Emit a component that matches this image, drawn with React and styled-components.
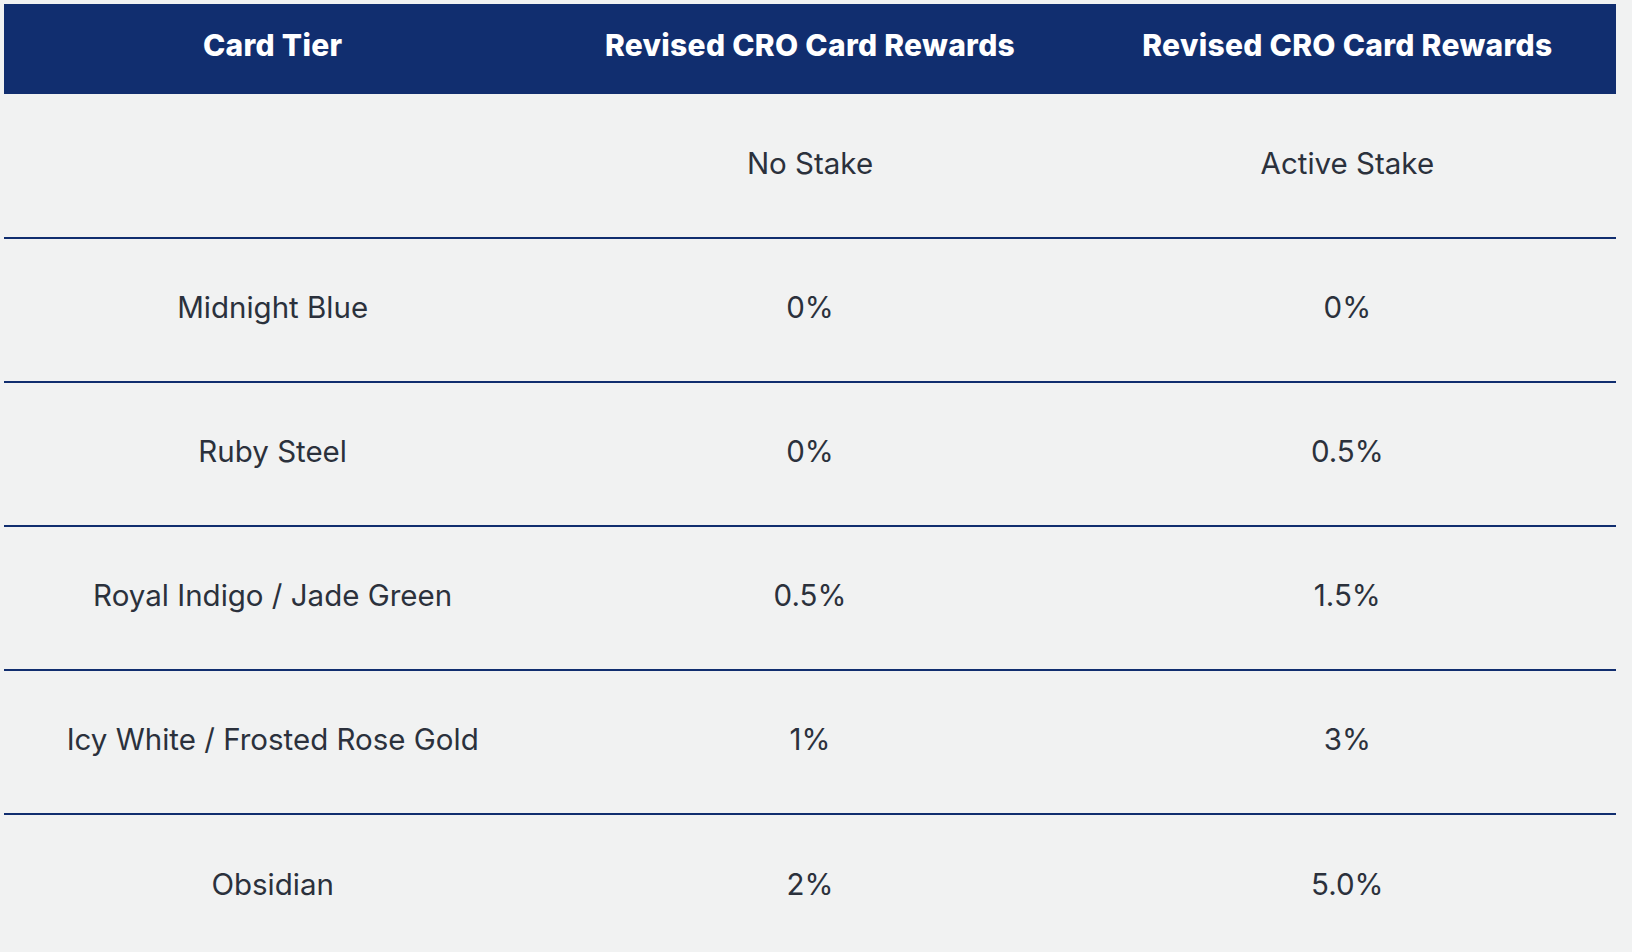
import styled, { createGlobalStyle } from 'styled-components';

const GlobalStyle = createGlobalStyle`
  html,
  body {
    margin: 0;
    background: #f1f2f2;
  }

  body {
    padding: 4px 16px 0 4px;
    font-family: Inter, 'Liberation Sans', sans-serif;
  }
`;

const Table = styled.table`
  width: 100%;
  border-collapse: collapse;
  table-layout: fixed;
`;

const HeadCell = styled.th`
  box-sizing: border-box;
  height: 90px;
  padding: 0 12px 8px;
  background: #112e6f;
  color: #ffffff;
  font-size: 30px;
  font-weight: 800;
  letter-spacing: 0.3px;
  text-align: center;
  vertical-align: middle;
`;

const Row = styled.tr`
  border-bottom: ${({ $last }) => ($last ? 'none' : '2px solid #112e6f')};
`;

const Cell = styled.td`
  box-sizing: border-box;
  height: 144px;
  padding: 0 12px 6px;
  color: #2b313c;
  font-size: 29.5px;
  font-weight: 400;
  text-align: center;
  vertical-align: middle;
`;

const rows = [
  ['', 'No Stake', 'Active Stake'],
  ['Midnight Blue', '0%', '0%'],
  ['Ruby Steel', '0%', '0.5%'],
  ['Royal Indigo / Jade Green', '0.5%', '1.5%'],
  ['Icy White / Frosted Rose Gold', '1%', '3%'],
  ['Obsidian', '2%', '5.0%'],
];

export default function App() {
  return (
    <>
      <GlobalStyle />
      <Table>
        <thead>
          <tr>
            <HeadCell>Card Tier</HeadCell>
            <HeadCell>Revised CRO Card Rewards</HeadCell>
            <HeadCell>Revised CRO Card Rewards</HeadCell>
          </tr>
        </thead>
        <tbody>
          {rows.map((row, i) => (
            <Row key={i} $last={i === rows.length - 1}>
              {row.map((value, j) => (
                <Cell key={j}>{value}</Cell>
              ))}
            </Row>
          ))}
        </tbody>
      </Table>
    </>
  );
}
